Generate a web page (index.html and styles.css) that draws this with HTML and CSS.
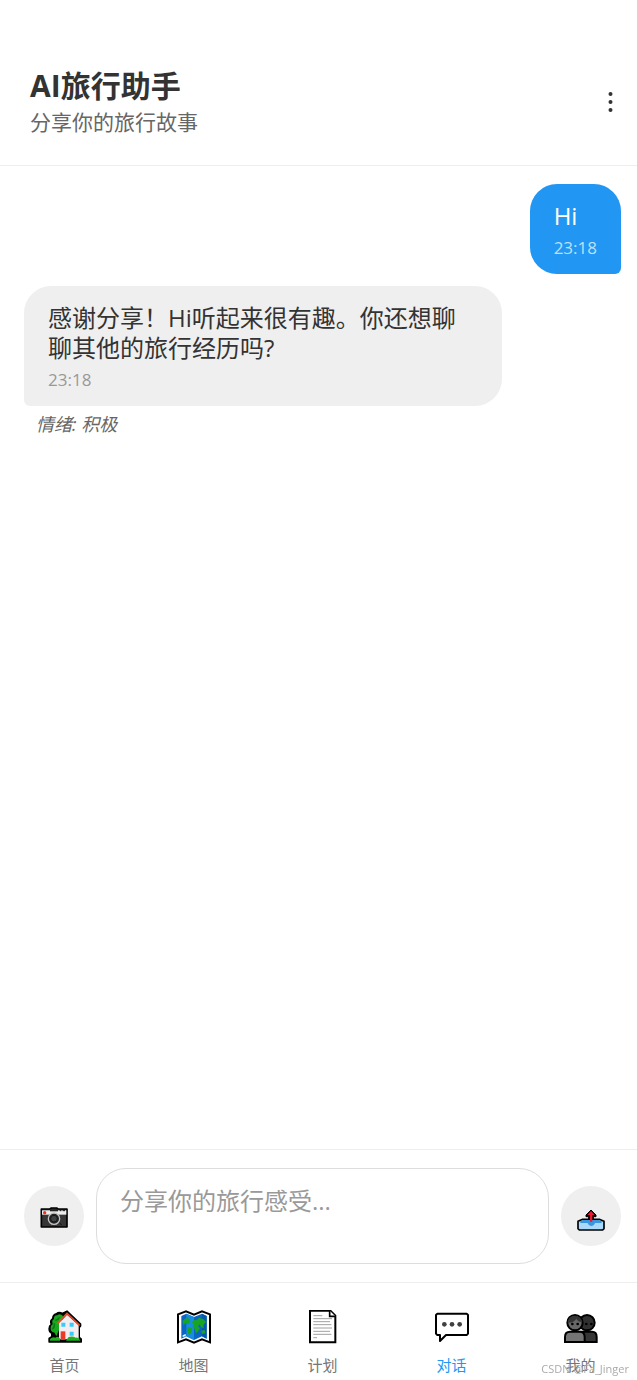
FILE: index.html
```html
<!DOCTYPE html>
<html lang="zh-CN">
<head>
<meta charset="utf-8">
<meta name="viewport" content="width=device-width, initial-scale=1">
<title>AI旅行助手</title>
<link rel="stylesheet" href="styles.css">
</head>
<body>
<div class="app">
  <header class="header">
    <div>
      <h1 class="title">AI旅行助手</h1>
      <p class="subtitle">分享你的旅行故事</p>
    </div>
    <button class="menu" type="button" aria-label="更多">
      <svg width="10" height="24" viewBox="0 0 10 24"><g fill="#333"><circle cx="5.500" cy="4" r="2"/><circle cx="5.500" cy="12" r="2"/><circle cx="5.500" cy="20" r="2"/></g></svg>
    </button>
  </header>

  <main class="messages">
    <article class="message message-user">
      <div class="bubble bubble-user">
        <p class="text">Hi</p>
        <time class="time">23:18</time>
      </div>
    </article>
    <article class="message">
      <div class="bubble bubble-bot">
        <p class="text">感谢分享！Hi听起来很有趣。你还想聊聊其他的旅行经历吗?</p>
        <time class="time">23:18</time>
      </div>
      <p class="mood">情绪: 积极</p>
    </article>
  </main>

  <form class="composer">
    <button class="round" type="button" aria-label="拍照">
      <svg width="30" height="30" viewBox="0 0 90 90">
        <path d="M7 24H33L37 21H53L57 24H84V78H7Z" fill="#363636" stroke="#000" stroke-width="5" stroke-linejoin="round"/>
        <path d="M9 28H82V41H9Z" fill="#ececec"/>
        <path d="M33 25H57V31H33Z" fill="#222"/>
        <path d="M62 29H67M71 29H78" stroke="#111" stroke-width="3"/>
        <circle cx="17" cy="35" r="5" fill="#f5301c"/>
        <circle cx="45" cy="53" r="17" fill="#252525" stroke="#c4c4c4" stroke-width="4"/>
        <circle cx="45" cy="53" r="10" fill="#3e4245" stroke="#151515" stroke-width="3"/>
        <path d="M62 67L68 71" stroke="#111" stroke-width="3"/>
      </svg>
    </button>
    <textarea class="input" aria-label="消息" placeholder="分享你的旅行感受..."></textarea>
    <button class="round" type="submit" aria-label="发送">
      <svg width="30" height="30" viewBox="0 0 90 90">
        <path d="M6 61L20 55H70L84 61V83L80 87H10L6 83Z" fill="#a9dafc" stroke="#000" stroke-width="5" stroke-linejoin="round"/>
        <path d="M10 62L22 57H68L80 62L75 66H57Q54 75 45 75Q38 75 35 66H15Z" fill="#3996df"/>
        <path d="M45 27L60 42V47H52V55H38V47H30V42Z" fill="#000" stroke="#000" stroke-width="3" stroke-linejoin="round"/>
        <path d="M45 30L56 42H49V62H42V42H34Z" fill="#e81836"/>
      </svg>
    </button>
  </form>

  <nav class="tabs">
    <a class="tab" href="#home">
      <svg class="icon" viewBox="0 0 102 102">
        <path d="M3 94V85L11 80V70Q3 66 3 56Q3 47 10 43Q4 33 14 26Q14 14 25 11Q33 4 43 10L57 3L98 42V48L94 53V82L100 87V96H3Z" fill="#000" stroke="#000" stroke-width="4" stroke-linejoin="round"/>
        <path d="M28 16Q17 15 18 28Q10 30 14 43Q7 46 8 57Q9 67 20 68L25 79L33 60L45 18Q36 9 28 16Z" fill="#18a81d"/>
        <path d="M19 40Q21 51 13 58M34 22Q32 29 22 31" fill="none" stroke="#087b13" stroke-width="4"/>
        <path d="M33 40L57 14L92 46V88H33Z" fill="#f2edf0"/>
        <path d="M26 42L57 10L95 46" fill="none" stroke="#ee4a2c" stroke-width="5"/>
        <path d="M40 38H52V50H40ZM65 38H77V50H65ZM65 65H77V77H65Z" fill="#39cafa"/>
        <path d="M38 64H52V90H38Z" fill="#ec3a24"/>
        <path d="M6 92V87Q14 80 22 83Q30 77 36 86V92ZM54 92L61 82Q72 77 83 83Q92 80 97 92Z" fill="#1daf1f"/>
      </svg>
      <span>首页</span>
    </a>
    <a class="tab" href="#map">
      <svg class="icon" viewBox="0 0 102 102">
        <path d="M3 13L27 4L51 14L75 4L99 13V97L75 88L51 98L27 88L3 97Z" fill="#fff" stroke="#000" stroke-width="6" stroke-linejoin="miter"/>
        <path d="M13 18L28 11L51 21L75 11L89 18V86L75 79L51 90L28 79L13 86Z" fill="#0b65c2"/>
        <path d="M28 11L51 21V90L28 79Z" fill="#168de0"/>
        <path d="M75 11L89 18V86L75 79Z" fill="#075aaa"/>
        <path d="M16 33L26 25L40 27L36 38L30 43L24 40L20 47ZM32 51L46 55L42 68L36 76L32 65ZM48 32L54 29L59 31L66 23L80 28L87 36L80 44V55L72 52L68 43L63 50L69 54L63 65L57 70L53 57L47 50L51 42ZM72 64L82 59L86 69L76 72Z" fill="#18a424"/>
        <path d="M28 22L34 20V26ZM44 37L48 34V40Z" fill="#18a424"/>
        <path d="M17 76L26 72V78L17 81Z" fill="#fff"/>
      </svg>
      <span>地图</span>
    </a>
    <a class="tab" href="#plan">
      <svg class="icon" viewBox="0 0 102 102">
        <path d="M12 2H73L88 17V97H12Z" fill="#fff" stroke="#000" stroke-width="6"/>
        <path d="M71 2V19H88" fill="#fff" stroke="#000" stroke-width="5"/>
        <path d="M22 17H49M22 26H78M22 35H72M22 44H76M22 54H78M22 64H72M22 73H76M22 83H33" stroke="#a0a0a0" stroke-width="3"/>
      </svg>
      <span>计划</span>
    </a>
    <a class="tab tab-active" href="#chat">
      <svg class="icon" viewBox="0 0 102 102">
        <path d="M7 11H95L99 15V71L95 75H33L15 93V75H7L3 71V15Z" fill="#fff" stroke="#000" stroke-width="6" stroke-linejoin="round"/>
        <g fill="#404040"><circle cx="28" cy="43" r="7"/><circle cx="51" cy="43" r="7"/><circle cx="74" cy="43" r="7"/></g>
      </svg>
      <span>对话</span>
    </a>
    <a class="tab" href="#me">
      <svg class="icon" viewBox="0 0 102 102">
        <path d="M50 65H84Q98 65 98 81V96H50Z" fill="#363636" stroke="#000" stroke-width="6"/>
        <circle cx="69" cy="38" r="23" fill="#303030" stroke="#000" stroke-width="6"/>
        <path d="M3 96V81Q3 65 18 65H47Q62 65 62 81V96Z" fill="#757575" stroke="#000" stroke-width="6"/>
        <circle cx="33" cy="38" r="23" fill="#686868" stroke="#000" stroke-width="6"/>
        <path d="M11 38Q13 17 33 17Q50 17 55 37Q42 36 37 26Q29 39 11 38Z" fill="#343434"/>
        <g fill="#000"><circle cx="25" cy="42" r="4"/><circle cx="41" cy="42" r="4"/><circle cx="67" cy="42" r="4"/><circle cx="82" cy="42" r="4"/></g>
      </svg>
      <span>我的</span>
    </a>
  </nav>
</div>
<div class="watermark">CSDN @Fa_Jinger</div>
</body>
</html>
```
FILE: styles.css
```css
* {
  box-sizing: border-box;
}

body {
  margin: 0;
  overflow: hidden;
  background: #fff;
  color: #333;
  font-family: "Open Sans", "Noto Sans CJK SC", sans-serif;
}

h1,
p {
  margin: 0;
}

button {
  border: 0;
  padding: 0;
  background: none;
  cursor: pointer;
}

svg {
  display: block;
}

.app {
  display: flex;
  flex-direction: column;
  width: calc(100% + 8px);
  min-height: 100vh;
}

.header {
  display: flex;
  align-items: center;
  justify-content: space-between;
  padding: 66px 30px 27px;
  border-bottom: 1px solid #eee;
}

.title {
  font-size: 30px;
  line-height: 40px;
  font-weight: 700;
}

.subtitle {
  color: #666;
  font-size: 21px;
  line-height: 32px;
}

.messages {
  display: flex;
  flex: 1;
  flex-direction: column;
  gap: 12px;
  padding: 18px 24px;
}

.message {
  display: flex;
  flex-direction: column;
  align-items: flex-start;
}

.message-user {
  align-items: flex-end;
}

.bubble {
  max-width: 80%;
  padding: 17px 24px;
  border-radius: 27px;
}

.bubble-user {
  border-bottom-right-radius: 6px;
  background: #2196f3;
  color: #fff;
}

.bubble-bot {
  border-bottom-left-radius: 6px;
  background: #efefef;
}

.text {
  font-size: 24px;
  line-height: 30px;
}

.time {
  display: block;
  margin-top: 8px;
  color: #999;
  font-size: 17px;
  line-height: 18px;
}

.bubble-user .time {
  color: #bce0fb;
}

.mood {
  margin: 6px 12px 0;
  color: #666;
  font-size: 18px;
  font-style: italic;
  line-height: 24px;
}

.composer {
  display: flex;
  align-items: center;
  gap: 12px;
  padding: 18px 24px;
  border-top: 1px solid #eee;
  border-bottom: 1px solid #eee;
}

.round {
  display: flex;
  flex: none;
  align-items: center;
  justify-content: center;
  width: 60px;
  height: 60px;
  border-radius: 50%;
  background: #efefef;
}

.input {
  flex: 1;
  min-width: 0;
  height: 96px;
  padding: 17px 23px;
  border: 1px solid #ddd;
  border-radius: 30px;
  background: #fff;
  color: #333;
  font: 24px/30px "Open Sans", "Noto Sans CJK SC", sans-serif;
  resize: none;
}

.input::placeholder {
  color: #999;
}

.tabs {
  display: flex;
  padding: 27px 0 5px;
}

.tab {
  display: flex;
  flex: 1;
  flex-direction: column;
  align-items: center;
  gap: 11px;
  color: #757575;
  font-size: 15px;
  line-height: 20px;
  text-decoration: none;
}

.tab-active {
  color: #2196f3;
}

.icon {
  width: 34px;
  height: 34px;
}

.watermark {
  position: fixed;
  right: 8px;
  bottom: 3px;
  color: #aaa;
  font: 11px/16px "Open Sans", sans-serif;
  pointer-events: none;
}
```
